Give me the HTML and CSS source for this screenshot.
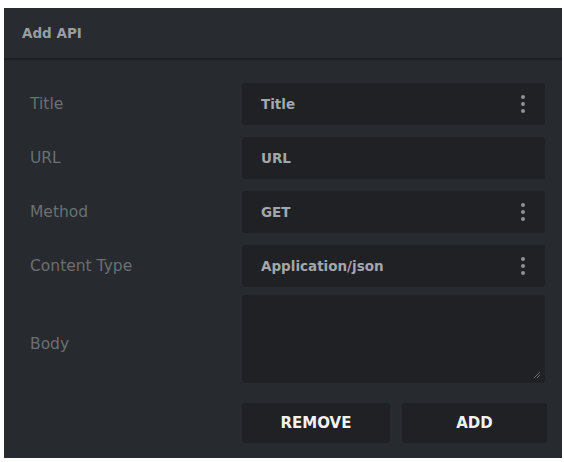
FILE: index.html
```html
<!DOCTYPE html>
<html lang="en">
<head>
  <meta charset="UTF-8" />
  <title>Add API</title>
  <link rel="stylesheet" href="styles.css">
</head>
<body>
  <div class="panel">
    <div class="panel-header">Add API</div>

    <form class="api-form">
      <label class="form-label">Title</label>
      <div class="field">
        <span class="field-text">Title</span>
        <span class="dots"><i></i><i></i><i></i></span>
      </div>

      <label class="form-label">URL</label>
      <div class="field">
        <span class="field-text">URL</span>
      </div>

      <label class="form-label">Method</label>
      <div class="field">
        <span class="field-text">GET</span>
        <span class="dots"><i></i><i></i><i></i></span>
      </div>

      <label class="form-label">Content Type</label>
      <div class="field">
        <span class="field-text">Application/json</span>
        <span class="dots"><i></i><i></i><i></i></span>
      </div>

      <label class="form-label body-label">Body</label>
      <div class="field body-field">
        <svg class="grip" width="8" height="8" viewBox="0 0 8 8">
          <path d="M7 1 L1 7 M7 4 L4 7" stroke="#6a6d71" stroke-width="1" fill="none"/>
        </svg>
      </div>

      <div></div>
      <div class="actions">
        <button type="button" class="btn">REMOVE</button>
        <button type="button" class="btn">ADD</button>
      </div>
    </form>
  </div>
</body>
</html>
```

FILE: styles.css
```css
body {
  margin: 0;
  background-color: #fff;
  font-family: 'DejaVu Sans', 'Lato', sans-serif;
}

.panel {
  margin: 8px 2px 4px 4px;
  height: 450px;
  background-color: #272a2e;
  box-sizing: border-box;
}

.panel-header {
  height: 50px;
  padding-left: 18px;
  display: flex;
  align-items: center;
  font-size: 13.5px;
  font-weight: bold;
  color: #9a9da1;
  background-color: #282b2f;
  border-bottom: 2px solid #1d1f22;
}

.api-form {
  display: grid;
  grid-template-columns: 212px 303px;
  row-gap: 12px;
  padding: 23px 0 0 26px;
}

.form-label {
  display: flex;
  align-items: center;
  font-size: 15.5px;
  color: #6c6f73;
}

.field {
  height: 42px;
  background-color: #1f2124;
  border-radius: 3px;
  display: flex;
  align-items: center;
  justify-content: space-between;
  padding: 0 20px 0 19px;
  box-sizing: border-box;
}

.field-text {
  font-size: 13.5px;
  font-weight: bold;
  color: #a3a6aa;
}

.dots {
  display: flex;
  flex-direction: column;
  gap: 3px;
}

.dots i {
  width: 4px;
  height: 4px;
  border-radius: 50%;
  background-color: #8d9094;
}

.body-label,
.body-field {
  margin-top: -4px;
}

.body-label {
  padding-top: 10px;
}

.body-field {
  height: 88px;
  align-items: flex-end;
  justify-content: flex-end;
  padding: 0 4px 4px 0;
}

.grip {
  display: block;
}

.actions {
  display: grid;
  grid-template-columns: 148px 145px;
  column-gap: 12px;
  margin-top: 8px;
}

.btn {
  height: 40px;
  border: none;
  border-radius: 3px;
  background-color: #1f2124;
  color: #f2f2f2;
  font-family: 'DejaVu Sans', sans-serif;
  font-size: 15px;
  font-weight: bold;
}
```
